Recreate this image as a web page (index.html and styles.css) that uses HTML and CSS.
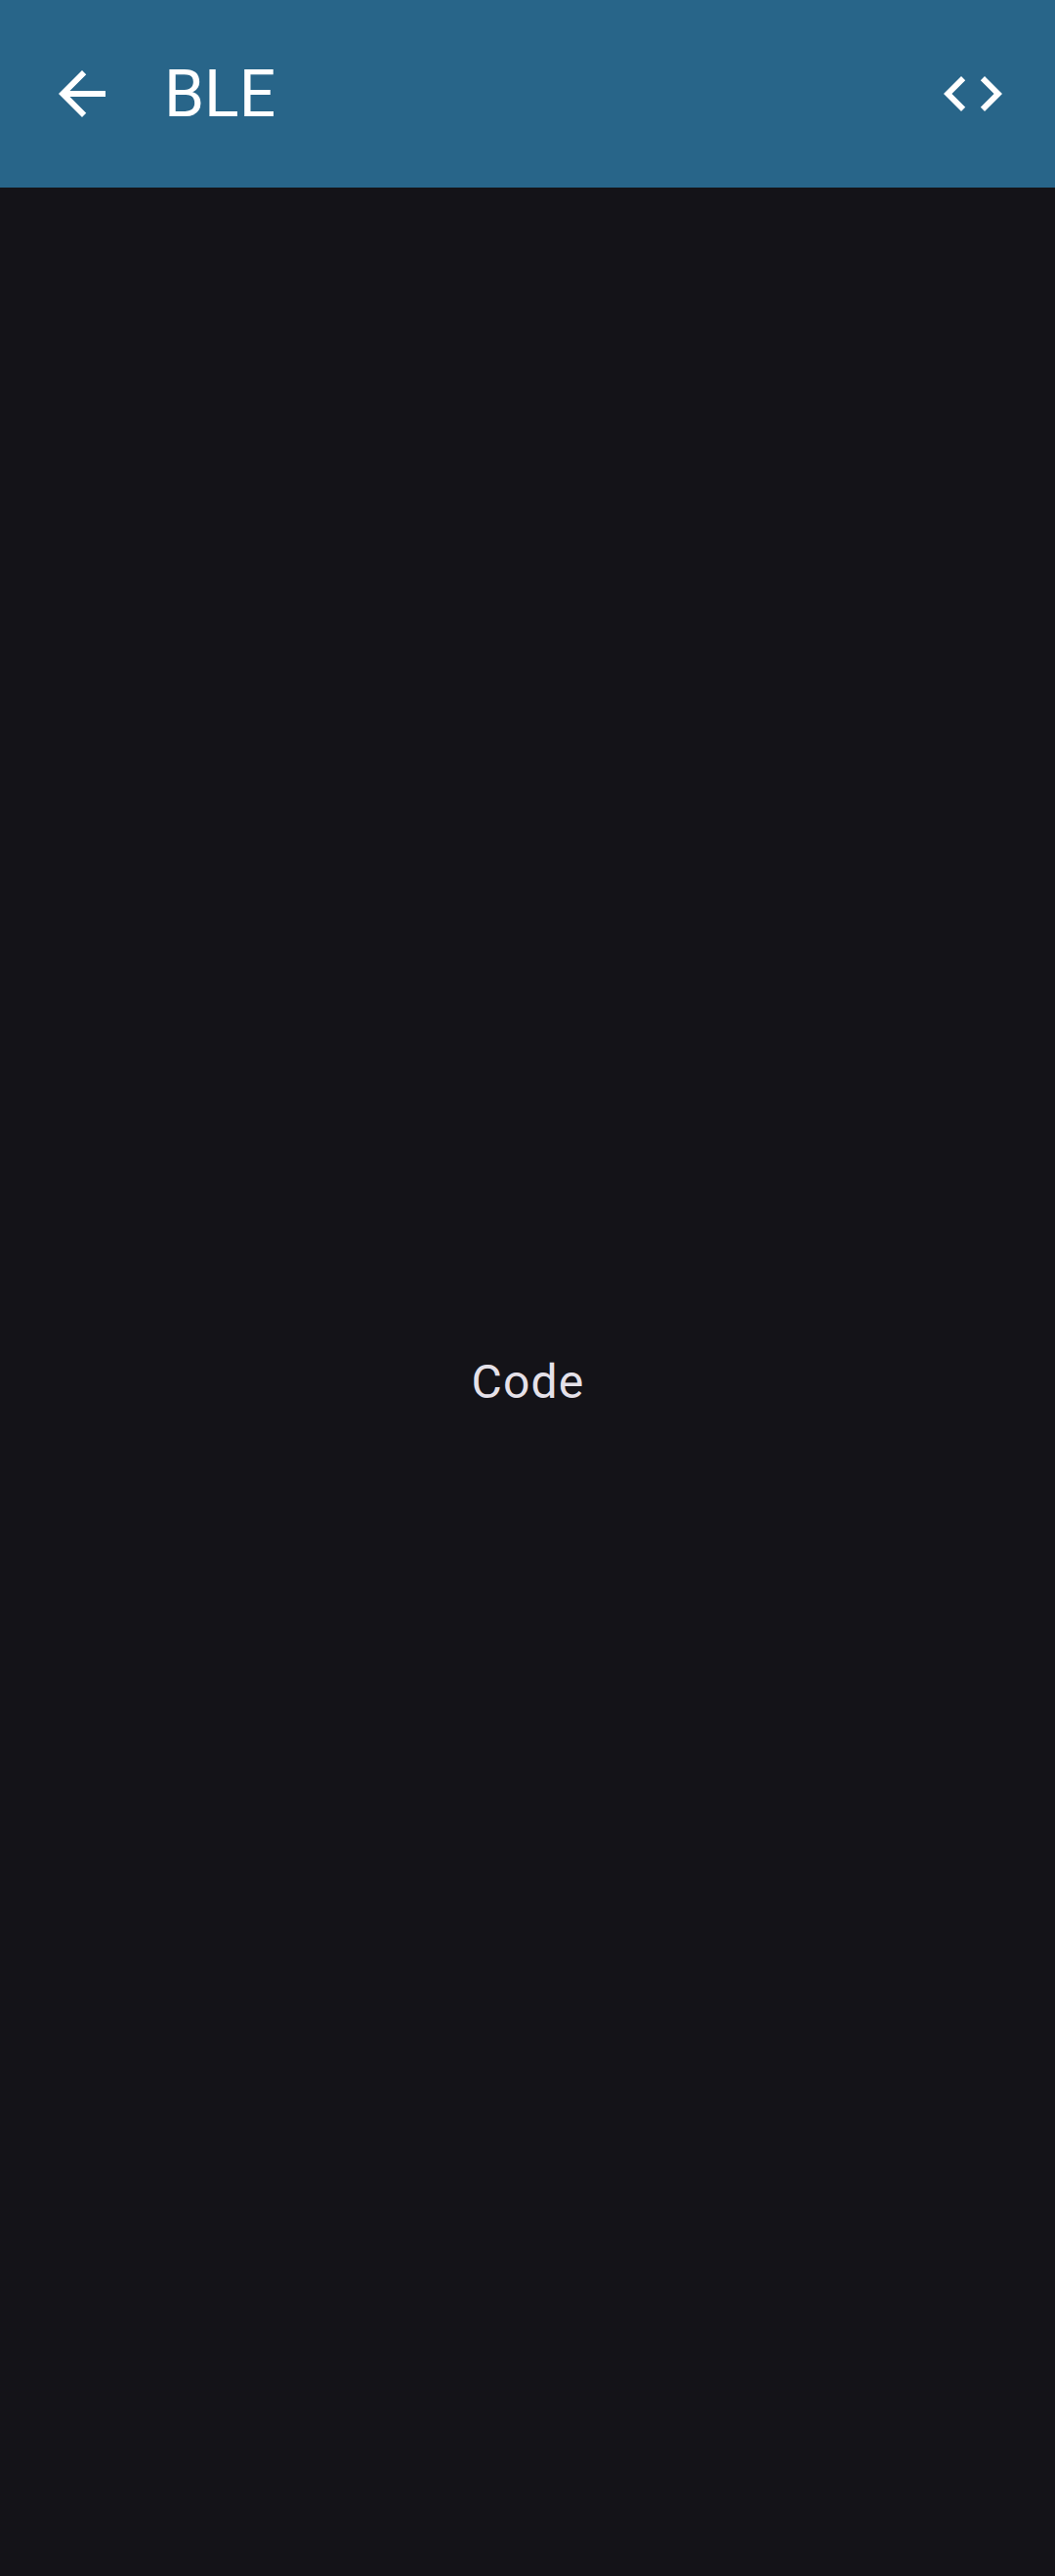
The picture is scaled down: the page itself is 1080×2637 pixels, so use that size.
FILE: index.html
```html
<!DOCTYPE html>
<html lang="en">
<head>
<meta charset="utf-8">
<title>BLE</title>
<link rel="stylesheet" href="styles.css">
</head>
<body>
<div class="screen">
  <header class="app-bar">
    <button class="icon-button" aria-label="Back">
      <svg class="icon" viewBox="0 0 24 24"><path d="M20 11H7.83l5.59-5.59L12 4l-8 8 8 8 1.41-1.41L7.83 13H20v-2z"/></svg>
    </button>
    <h1 class="title">BLE</h1>
    <button class="icon-button" aria-label="View code">
      <svg class="icon" viewBox="0 0 24 24"><path d="M9.4 16.6L4.8 12l4.6-4.6L8 6l-6 6 6 6 1.4-1.4zm5.2 0l4.6-4.6-4.6-4.6L16 6l6 6-6 6-1.4-1.4z"/></svg>
    </button>
  </header>
  <main class="content">
    <p class="label">Code</p>
  </main>
</div>
</body>
</html>
```

FILE: styles.css
```css
body {
  margin: 0;
  font-family: Roboto, sans-serif;
}

.screen {
  display: flex;
  flex-direction: column;
  height: 2637px;
  background: #141318;
}

.app-bar {
  display: flex;
  align-items: center;
  box-sizing: border-box;
  height: 192px;
  padding: 0 12px;
  background: #286589;
  color: #fff;
}

.icon-button {
  display: flex;
  align-items: center;
  justify-content: center;
  width: 144px;
  height: 144px;
  padding: 0;
  border: 0;
  background: none;
  color: inherit;
}

.icon {
  width: 72px;
  height: 72px;
  fill: currentColor;
}

.title {
  flex: 1;
  margin: 0 0 0 12px;
  padding-top: 2px;
  font-size: 66px;
  font-weight: 400;
  line-height: 84px;
}

.content {
  display: flex;
  flex: 1;
  align-items: center;
  justify-content: center;
}

.label {
  margin: 0;
  padding-left: 1px;
  color: #e5e1e9;
  font-size: 48px;
  line-height: 72px;
  letter-spacing: 1.2px;
}
```
